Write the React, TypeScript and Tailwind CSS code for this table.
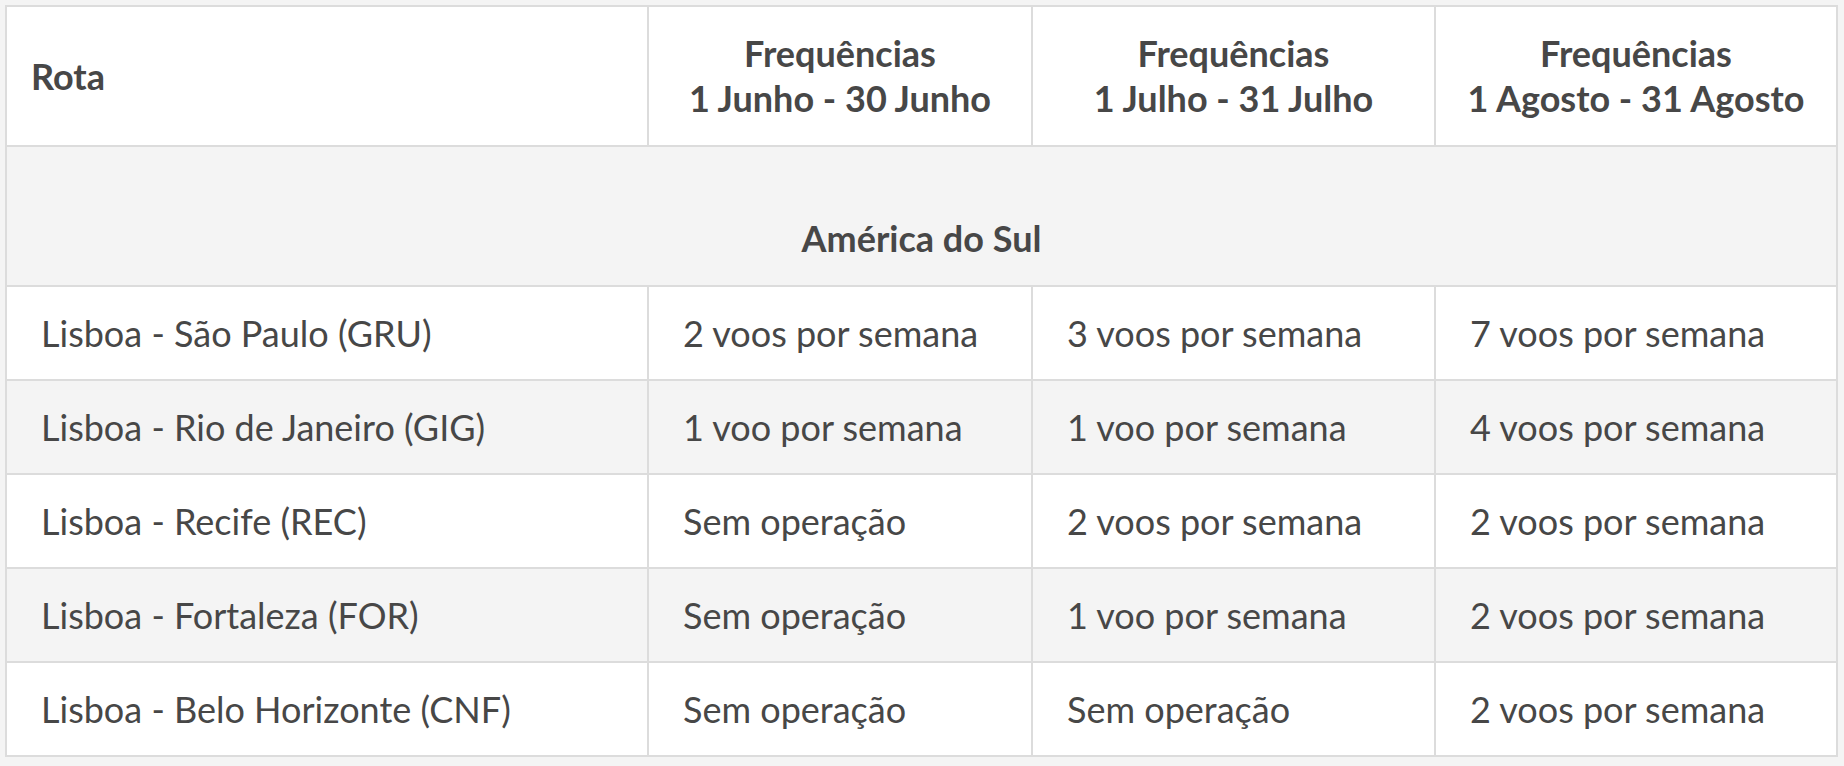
const header = ['1 Junho - 30 Junho', '1 Julho - 31 Julho', '1 Agosto - 31 Agosto']

const rows = [
  { rota: 'Lisboa - São Paulo (GRU)', f: ['2 voos por semana', '3 voos por semana', '7 voos por semana'] },
  { rota: 'Lisboa - Rio de Janeiro (GIG)', f: ['1 voo por semana', '1 voo por semana', '4 voos por semana'] },
  { rota: 'Lisboa - Recife (REC)', f: ['Sem operação', '2 voos por semana', '2 voos por semana'] },
  { rota: 'Lisboa - Fortaleza (FOR)', f: ['Sem operação', '1 voo por semana', '2 voos por semana'] },
  { rota: 'Lisboa - Belo Horizonte (CNF)', f: ['Sem operação', 'Sem operação', '2 voos por semana'] },
]

export default function App() {
  return (
    <div className="min-h-screen bg-[#f4f4f4] pt-[5px] pl-[5px] font-['Lato',sans-serif] text-[#474747]">
      <table className="w-[1831px] table-fixed border-collapse border-2 border-[#dcdcdc] text-[36px] leading-[45px]">
        <colgroup>
          <col className="w-[642px]" />
          <col className="w-[384px]" />
          <col className="w-[403px]" />
          <col className="w-[402px]" />
        </colgroup>
        <thead>
          <tr className="h-[140px] bg-white">
            <th className="border-2 border-[#dcdcdc] px-[24px] text-left font-bold">Rota</th>
            {header.map((h) => (
              <th key={h} className="border-2 border-[#dcdcdc] px-2 text-center font-bold">
                <div>Frequências</div>
                <div>{h}</div>
              </th>
            ))}
          </tr>
        </thead>
        <tbody>
          <tr className="h-[140px] bg-[#f4f4f4]">
            <td colSpan={4} className="border-2 border-[#dcdcdc] pb-[24px] text-center align-bottom font-bold">
              América do Sul
            </td>
          </tr>
          {rows.map((r, i) => (
            <tr key={r.rota} className={`h-[94px] ${i % 2 === 0 ? 'bg-white' : 'bg-[#f4f4f4]'}`}>
              <td className="border-2 border-[#dcdcdc] px-[34px]">{r.rota}</td>
              {r.f.map((v, j) => (
                <td key={j} className="border-2 border-[#dcdcdc] px-[34px]">
                  {v}
                </td>
              ))}
            </tr>
          ))}
        </tbody>
      </table>
    </div>
  )
}
